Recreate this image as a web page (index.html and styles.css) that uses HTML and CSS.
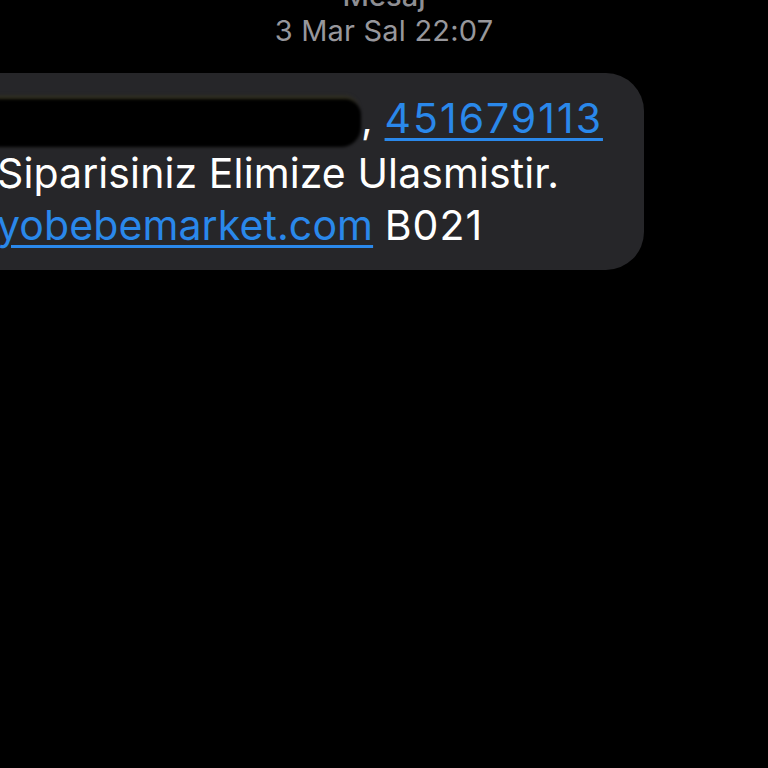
FILE: index.html
```
<!DOCTYPE html>
<html lang="tr">
<head>
<meta charset="utf-8">
<link rel="stylesheet" href="styles.css">
</head>
<body>
<div class="screen">
  <div class="header">
    <div class="title">Mesaj</div>
    <div class="time">3 Mar Sal 22:07</div>
  </div>
  <div class="thread">
    <div class="bubble">
      <div class="line"><span class="redact"></span>, <a class="link num">451679113</a></div>
      <div class="line">Siparisiniz Elimize Ulasmistir.</div>
      <div class="line"><a class="link">yobebemarket.com</a> <span class="code">B021</span></div>
    </div>
  </div>
</div>
</body>
</html>
```
FILE: styles.css
```
html, body {
  margin: 0;
  padding: 0;
  background: #000;
}
.screen {
  width: 768px;
  height: 768px;
  overflow: hidden;
  background: #000;
  font-family: Inter, "Noto Sans", sans-serif;
}
.header {
  display: flex;
  flex-direction: column;
  align-items: center;
  padding-left: 0;
  margin-top: -21px;
}
.title {
  color: #8e8e93;
  font-size: 29px;
  line-height: 34px;
  font-weight: 500;
}
.time {
  color: #97979c;
  font-size: 29px;
  line-height: 36px;
  letter-spacing: 0.2px;
}
.thread {
  margin-top: 24px;
}
.bubble {
  display: inline-block;
  margin-left: -40px;
  padding: 19px 41px 19px 37px;
  background: #262629;
  border-radius: 38px;
  color: #fff;
  font-size: 41px;
  line-height: 52px;
  letter-spacing: 0.1px;
}
.line {
  white-space: nowrap;
}
.link {
  color: #2a88ea;
  text-decoration: underline;
  text-decoration-thickness: 3px;
  text-underline-offset: 5px;
}
.num {
  letter-spacing: 2px;
}
.code {
  letter-spacing: 1px;
}
.redact {
  display: inline-block;
  width: 370px;
  height: 48px;
  vertical-align: -14px;
  margin-left: -6px;
  background: #000;
  border-radius: 4px 16px 20px 2px;
  box-shadow: 0 -6px 4px -4px rgba(90, 80, 0, 0.35);
  filter: blur(1.5px);
}
```
